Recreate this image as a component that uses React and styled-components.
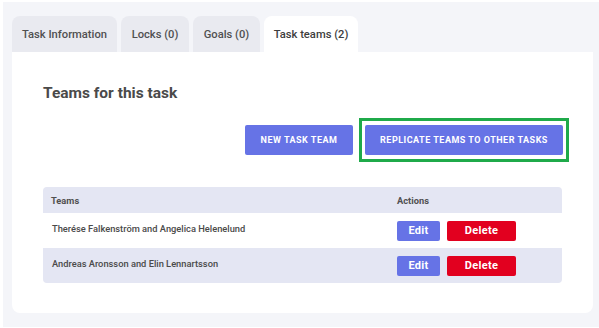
import React from 'react'
import styled, { createGlobalStyle } from 'styled-components'

const GlobalStyle = createGlobalStyle`
    html, body {
        margin: 0;
        padding: 0;
        background: #ffffff;
        font-family: Roboto, "Liberation Sans", Arial, sans-serif;
    }
    * { box-sizing: border-box; }
`

const tabs = [
    { label: 'Task Information', width: 105 },
    { label: 'Locks (0)', width: 68 },
    { label: 'Goals (0)', width: 67 },
    { label: 'Task teams (2)', width: 94 },
]

const teams = [
    'Therése Falkenström and Angelica Helenelund',
    'Andreas Aronsson and Elin Lennartsson',
]

const App = () => {
    return (
        <Page>
            <GlobalStyle />
            <Tabs>
                {tabs.map((t, i) => (
                    <Tab key={t.label} $width={t.width} $active={i === tabs.length - 1}>{t.label}</Tab>
                ))}
            </Tabs>
            <Card>
                <Title>Teams for this task</Title>
                <Toolbar>
                    <PrimaryButton>New task team</PrimaryButton>
                    <Highlight>
                        <PrimaryButton $wide>Replicate teams to other tasks</PrimaryButton>
                    </Highlight>
                </Toolbar>
                <Table>
                    <HeadRow>
                        <HeadCell>Teams</HeadCell>
                        <HeadCell $flush>Actions</HeadCell>
                    </HeadRow>
                    {teams.map((name, i) => (
                        <Row key={name} $odd={i % 2 === 1}>
                            <Cell>{name}</Cell>
                            <Actions>
                                <SmallButton>Edit</SmallButton>
                                <SmallButton $danger>Delete</SmallButton>
                            </Actions>
                        </Row>
                    ))}
                </Table>
            </Card>
        </Page>
    )
}

export default App

const Page = styled.div`
    margin: 2px 0 0 3px;
    width: 596px;
    height: 325px;
    background: #f4f5f9;
    padding: 14px 6px 0 9px;
`

const Tabs = styled.div`
    display: flex;
    gap: 4px;
    height: 36px;
`

const Tab = styled.div`
    width: ${p => p.$width}px;
    height: 36px;
    display: flex;
    align-items: center;
    justify-content: center;
    border-radius: 8px 8px 0 0;
    font-size: 11.2px;
    font-weight: 500;
    color: ${p => p.$active ? '#3d3d3d' : '#505050'};
    background: ${p => p.$active ? '#ffffff' : '#e9eaf0'};
`

const Card = styled.div`
    background: #ffffff;
    border-radius: 0 0 8px 8px;
    height: 261px;
    padding: 31px 30px 0 31px;
`

const Title = styled.h2`
    margin: 0;
    font-size: 15.5px;
    font-weight: 700;
    color: #4a4a4a;
    line-height: 20px;
`

const Toolbar = styled.div`
    display: flex;
    justify-content: flex-end;
    align-items: center;
    gap: 3px;
    margin-top: 15px;
`

const Highlight = styled.div`
    border: 3px solid #1faa4a;
    padding: 4px 3px;
    margin-right: -6px;
`

const PrimaryButton = styled.button`
    height: 30px;
    width: ${p => p.$wide ? '198px' : '108px'};
    border: none;
    border-radius: 2px;
    background: #6673e6;
    color: #ffffff;
    font-family: Roboto, "Liberation Sans", Arial, sans-serif;
    font-size: 9px;
    font-weight: 700;
    letter-spacing: 0.5px;
    text-transform: uppercase;
    margin-right: ${p => p.$wide ? '0' : '3px'};
`

const Table = styled.div`
    margin-top: 25px;
    width: 519px;
    border-radius: 4px;
    overflow: hidden;
    font-size: 9.3px;
    color: #4a4a4a;
`

const grid = `
    display: grid;
    grid-template-columns: 354px 1fr;
    align-items: center;
`

const HeadRow = styled.div`
    ${grid}
    height: 26px;
    background: #e4e6f3;
`

const HeadCell = styled.div`
    padding-left: ${p => p.$flush ? '0' : '8px'};
    font-weight: 700;
    color: #505050;
`

const Row = styled.div`
    ${grid}
    height: 35px;
    background: ${p => p.$odd ? '#e4e6f3' : '#ffffff'};
`

const Cell = styled.div`
    padding: 0 0 4px 9px;
    font-weight: 500;
    color: #4a4a4a;
`

const Actions = styled.div`
    display: flex;
    gap: 7px;
`

const SmallButton = styled.button`
    height: 20px;
    width: ${p => p.$danger ? '69px' : '43px'};
    border: none;
    border-radius: 2px;
    background: ${p => p.$danger ? '#e2001f' : '#6673e6'};
    color: #ffffff;
    font-family: Roboto, "Liberation Sans", Arial, sans-serif;
    font-size: 11px;
    font-weight: 700;
    letter-spacing: 0.3px;
`
